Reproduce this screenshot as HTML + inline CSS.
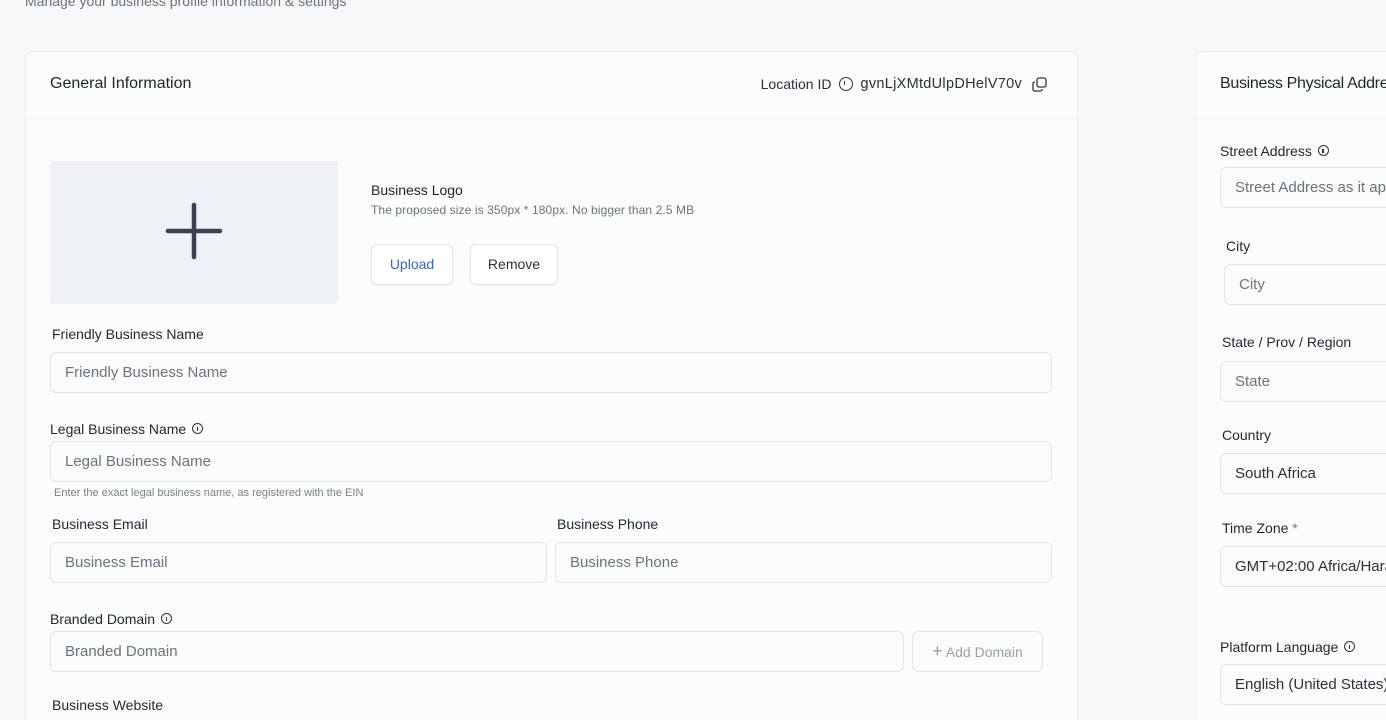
<!DOCTYPE html>
<html><head><style>
*{box-sizing:border-box;margin:0;padding:0}
html,body{width:1386px;height:720px;overflow:hidden}
body{background:#f7f8f9;font-family:"Liberation Sans",sans-serif;color:#1d2330;position:relative}
.a{position:absolute}
.card{position:absolute;background:#fcfcfd;border:1px solid #eceef1;border-radius:8px}
.lbl{position:absolute;font-size:14px;color:#1f2633}
.inp{position:absolute;height:41px;border:1px solid #e1e4e9;border-radius:6px;background:#fbfbfc;font-size:15px;color:#6b7280;padding-left:14px;line-height:39px;white-space:nowrap;overflow:hidden}
.btn{position:absolute;height:41px;border:1px solid #e1e4e9;border-radius:6px;background:#fff;font-size:14px;line-height:39px;text-align:center;box-shadow:0 1px 2px rgba(0,0,0,.05)}
.i{display:inline-block;width:11px;height:11px;border:1.3px solid #333;border-radius:50%;vertical-align:0;margin-left:6px;position:relative}
.i:after{content:"";position:absolute;left:3.5px;top:2.5px;width:1.3px;height:4px;background:#333}
</style></head><body>
<div class="a" style="left:25px;top:-7px;font-size:14px;color:#6b7280">Manage your business profile information &amp; settings</div>
<div class="card" style="left:25px;top:51px;width:1053px;height:700px"></div>
<div class="a" style="left:26px;top:118px;width:1051px;height:1px;background:#eceef1"></div>
<div class="a" style="left:50px;top:75px;font-size:16px">General Information</div>
<div class="a" style="right:339px;top:76px;font-size:14px;color:#2a303c;white-space:nowrap;display:flex;align-items:center">Location ID <span class="i" style="width:14px;height:14px;margin:0 7px 0 8px"></span><span style="letter-spacing:0.3px;font-size:14.5px">gvnLjXMtdUlpDHelV70v</span><svg style="margin-left:10px" width="15" height="15" viewBox="0 0 15 15" fill="none" stroke="#333" stroke-width="1.3"><rect x="5" y="1" width="9" height="9" rx="2"/><path d="M3 5H2.5A1.5 1.5 0 0 0 1 6.5v6A1.5 1.5 0 0 0 2.5 14h6A1.5 1.5 0 0 0 10 12.5V12"/></svg></div>
<div class="a" style="left:50px;top:161px;width:288px;height:143px;background:#eef1f5;border-radius:3px"></div>
<svg class="a" style="left:165px;top:202px" width="58" height="58" viewBox="0 0 58 58" stroke="#3a4150" stroke-width="4.5" stroke-linecap="round"><path d="M29 3v52M3 29h52"/></svg>
<div class="a" style="left:371px;top:182px;font-size:14px">Business Logo</div>
<div class="a" style="left:371px;top:203px;font-size:12px;color:#6b7280;letter-spacing:0.1px">The proposed size is 350px * 180px. No bigger than 2.5 MB</div>
<div class="btn" style="left:371px;top:244px;width:82px;color:#3b63c4">Upload</div>
<div class="btn" style="left:470px;top:244px;width:88px;color:#2a303c">Remove</div>
<div class="lbl" style="left:52px;top:326px">Friendly Business Name</div>
<div class="inp" style="left:50px;top:352px;width:1002px">Friendly Business Name</div>
<div class="lbl" style="left:50px;top:421px">Legal Business Name<span class="i"></span></div>
<div class="inp" style="left:50px;top:441px;width:1002px">Legal Business Name</div>
<div class="a" style="left:54px;top:487px;font-size:11px;color:#7b818c">Enter the exact legal business name, as registered with the EIN</div>
<div class="lbl" style="left:52px;top:516px">Business Email</div>
<div class="inp" style="left:50px;top:542px;width:497px">Business Email</div>
<div class="lbl" style="left:557px;top:516px">Business Phone</div>
<div class="inp" style="left:555px;top:542px;width:497px">Business Phone</div>
<div class="lbl" style="left:50px;top:611px">Branded Domain<span class="i"></span></div>
<div class="inp" style="left:50px;top:631px;width:854px">Branded Domain</div>
<div class="btn" style="left:912px;top:631px;width:131px;color:#9aa0aa;box-shadow:none;background:#fbfbfc"><span style="font-size:18px">+</span> Add Domain</div>
<div class="lbl" style="left:52px;top:697px">Business Website</div>

<div class="card" style="left:1195px;top:51px;width:300px;height:700px"></div>
<div class="a" style="left:1196px;top:118px;width:200px;height:1px;background:#eceef1"></div>
<div class="a" style="left:1220px;top:75px;font-size:16px;white-space:nowrap;letter-spacing:-0.3px">Business Physical Address</div>
<div class="lbl" style="left:1220px;top:143px">Street Address<span class="i"></span></div>
<div class="inp" style="left:1220px;top:167px;width:200px">Street Address as it appears</div>
<div class="lbl" style="left:1226px;top:238px">City</div>
<div class="inp" style="left:1224px;top:264px;width:200px">City</div>
<div class="lbl" style="left:1222px;top:334px">State / Prov / Region</div>
<div class="inp" style="left:1220px;top:361px;width:200px">State</div>
<div class="lbl" style="left:1222px;top:427px">Country</div>
<div class="inp" style="left:1220px;top:453px;width:200px;color:#2a303c">South Africa</div>
<div class="lbl" style="left:1222px;top:520px">Time Zone <span style="color:#777">*</span></div>
<div class="inp" style="left:1220px;top:546px;width:200px;color:#2a303c">GMT+02:00 Africa/Harare</div>
<div class="lbl" style="left:1220px;top:639px">Platform Language<span class="i"></span></div>
<div class="inp" style="left:1220px;top:664px;width:200px;color:#2a303c">English (United States)</div>
</body></html>
